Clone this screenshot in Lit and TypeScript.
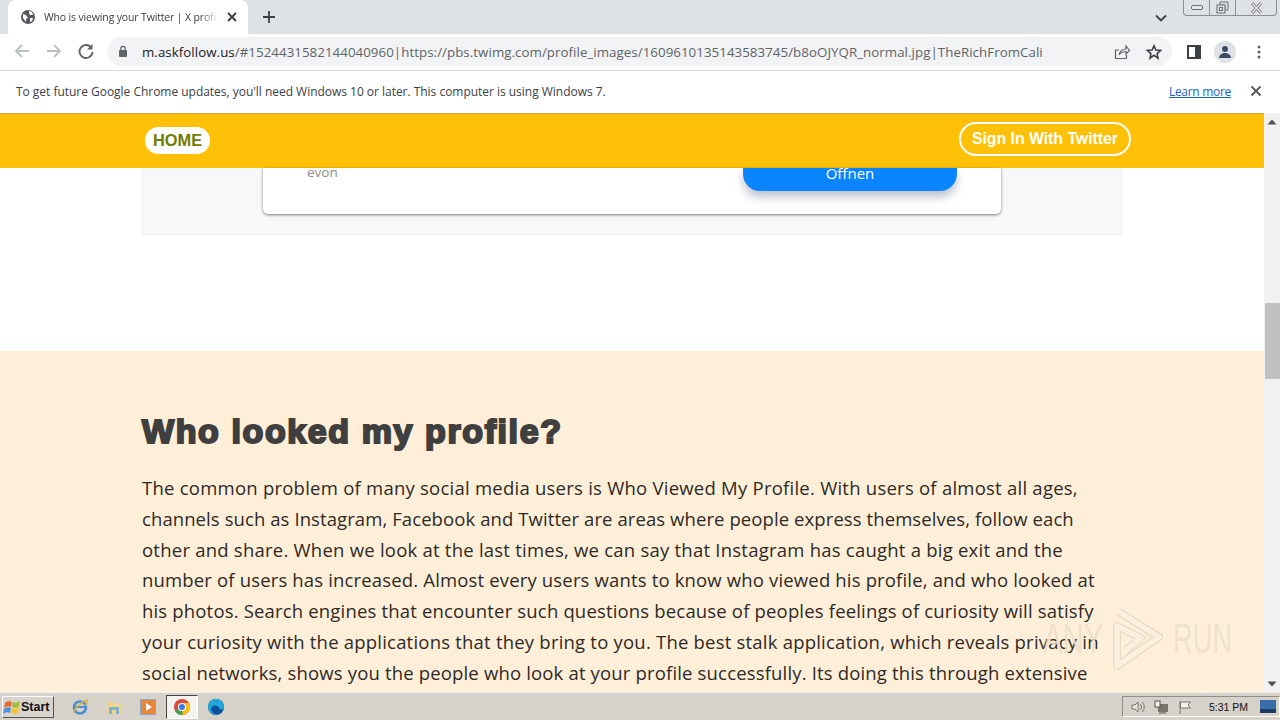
import {LitElement, html, css, svg} from 'lit';
import {customElement} from 'lit/decorators.js';

// spacing per line, the reference text is hinted wider than Open Sans
const LINES = [
  {text: 'The common problem of many social media users is Who Viewed My Profile. With users of almost all ages,', spacing: 0.24},
  {text: 'channels such as Instagram, Facebook and Twitter are areas where people express themselves, follow each', spacing: 0.087},
  {text: 'other and share. When we look at the last times, we can say that Instagram has caught a big exit and the', spacing: 0.23},
  {text: 'number of users has increased. Almost every users wants to know who viewed his profile, and who looked at', spacing: 0.16},
  {text: 'his photos. Search engines that encounter such questions because of peoples feelings of curiosity will satisfy', spacing: 0.17},
  {text: 'your curiosity with the applications that they bring to you. The best stalk application, which reveals privacy in', spacing: 0.21},
  {text: 'social networks, shows you the people who look at your profile successfully. Its doing this through extensive', spacing: 0.164},
];

@customElement('app-root')
export class AppRoot extends LitElement {
  static styles = css`
    :host {
      display: flex;
      flex-direction: column;
      width: 1280px;
      height: 720px;
      overflow: hidden;
      position: relative;
      background: #fff;
      font-family: 'Open Sans', 'Liberation Sans', sans-serif;
    }
    svg { display: block; flex: none; }

    .tabstrip {
      height: 34px;
      flex: none;
      background: #dee1e6;
      display: flex;
      align-items: flex-end;
      padding-left: 8px;
      position: relative;
    }
    .tab {
      width: 240px;
      height: 34px;
      background: #fff;
      border-radius: 8px 8px 0 0;
      display: flex;
      align-items: center;
      padding: 0 10px 0 12px;
      box-sizing: border-box;
      gap: 8px;
    }
    .tab-title {
      flex: 1;
      font: 10.5px 'Open Sans', sans-serif;
      letter-spacing: -0.15px;
      color: #3c4043;
      white-space: nowrap;
      overflow: hidden;
      -webkit-mask-image: linear-gradient(90deg, #000 90%, transparent);
    }
    .newtab { margin-left: 14px; align-self: center; }
    .tab-chevron { margin-left: auto; margin-right: 113px; align-self: center; margin-top: 2px; }
    .winbtns {
      position: absolute;
      top: 0;
      right: 3px;
      width: 94px;
      height: 16px;
      border: 1px solid #8b8e93;
      border-top: none;
      border-radius: 0 0 4px 4px;
      display: flex;
      box-sizing: border-box;
    }
    .winbtns > div {
      width: 25px;
      display: flex;
      align-items: center;
      justify-content: center;
      border-right: 1px solid #8b8e93;
    }
    .winbtns > div:nth-child(3) { flex: 1; border-right: none; }

    .toolbar {
      height: 37px;
      flex: none;
      background: #fff;
      border-bottom: 1px solid #d9dadc;
      box-sizing: border-box;
      display: flex;
      align-items: center;
      padding: 0 12px 2px 13px;
    }
    .nav { display: flex; gap: 14px; margin-right: 12px; }
    .omnibox {
      width: 1065px;
      height: 29px;
      box-sizing: border-box;
      background: #f1f3f4;
      border-radius: 15px;
      display: flex;
      align-items: center;
      padding: 0 10px 0 11px;
      margin-top: 1px;
    }
    .url {
      flex: 1;
      margin-left: 14px;
      font: 13.3px 'Open Sans', sans-serif;
      letter-spacing: 0.055px;
      color: #5f6368;
      white-space: nowrap;
      overflow: hidden;
    }
    .url b { font-weight: 400; color: #202124; }
    .omni-icons { display: flex; gap: 16px; margin-left: 60px; }
    .tool-right { display: flex; align-items: center; margin-left: 15px; gap: 13px; margin-top: 1px; }
    .avatar {
      width: 22px;
      height: 22px;
      border-radius: 50%;
      background: #dee1e6;
      display: flex;
      align-items: center;
      justify-content: center;
    }
    .dots { margin-left: 8px; }

    .infobar {
      height: 42px;
      flex: none;
      box-sizing: border-box;
      display: flex;
      align-items: center;
      padding: 0 18px 2px 16px;
      font: 12px 'Open Sans', sans-serif;
      color: #3c4043;
      background: #fff;
    }
    .infobar span { flex: 1; letter-spacing: -0.025px; }
    .infobar a { color: #1a62c5; text-decoration: underline; margin-right: 19px; letter-spacing: -0.3px; }

    .viewport {
      flex: 1;
      min-height: 0;
      display: flex;
      position: relative;
    }
    .page { flex: 1; min-width: 0; overflow: hidden; background: #fff; }
    .header {
      height: 55px;
      background: #ffc107;
      border-top: 1px solid #c9a544;
      box-sizing: border-box;
      display: flex;
      align-items: center;
      justify-content: space-between;
      padding: 0 133px 4px 145px;
    }
    .home {
      background: #fff;
      border-radius: 14px;
      height: 27px;
      padding: 0 8px;
      display: flex;
      align-items: center;
      font: 700 16.4px 'Liberation Sans', sans-serif;
      color: #6f7d00;
      margin-top: 3px;
    }
    .signin {
      border: 2px solid #fff;
      border-radius: 17px;
      height: 34px;
      box-sizing: border-box;
      padding: 0 11px;
      display: flex;
      align-items: center;
      font: 700 15.8px 'Liberation Sans', sans-serif;
      color: #fff;
      margin-top: -1px;
    }

    .ad {
      margin: 0 142px;
      width: 980px;
      height: 67px;
      box-sizing: border-box;
      background: #f8f8f8;
      border: 1px solid #eceded;
      border-top: none;
      padding: 0 120px;
    }
    .ad-card {
      height: 46px;
      background: #fff;
      border-radius: 0 0 5px 5px;
      box-shadow: 0 1px 3px rgba(0, 0, 0, 0.5);
      display: flex;
      justify-content: space-between;
      padding: 0 44px;
      box-sizing: border-box;
    }
    .evon { font: 13.5px 'Open Sans', sans-serif; color: #8d8d8d; margin-top: -5px; }
    .open {
      width: 214px;
      height: 23px;
      background: #0a84ff;
      border-radius: 0 0 17px 17px;
      box-shadow: 0 6px 10px rgba(40, 50, 90, 0.3);
      color: #fff;
      font: 15px 'Open Sans', sans-serif;
      text-align: center;
      line-height: 11px;
    }

    .article {
      margin-top: 116px;
      height: 400px;
      background: #ffefd9;
      padding: 58px 142px 0;
      box-sizing: border-box;
    }
    h1 {
      margin: -1px 0 19px;
      font: 700 34px/46px 'Liberation Sans', sans-serif;
      -webkit-text-stroke: 2.1px #3f3f3f;
      letter-spacing: 1.6px;
      color: #3f3f3f;
    }
    .line {
      display: block;
      font-size: 18.5px;
      line-height: 30.8px;
      color: #2d2a26;
      white-space: nowrap;
      font-family: 'Open Sans', sans-serif;
    }

    .scrollbar {
      width: 16px;
      flex: none;
      background: #f1f1f1;
      display: flex;
      flex-direction: column;
      align-items: center;
      padding-top: 190px;
      box-sizing: border-box;
      position: relative;
    }
    .thumb { width: 15px; height: 76px; background: #c1c1c1; }
    .arrow-up, .arrow-down { position: absolute; left: 3px; }
    .arrow-up { top: 6px; }
    .arrow-down { bottom: 5px; }

    .taskbar {
      height: 28px;
      flex: none;
      background: #d6d2c9;
      border-top: 1px solid #f3f1ec;
      box-sizing: border-box;
      display: flex;
      align-items: center;
      padding: 0 0 0 2px;
      position: relative;
    }
    .start {
      width: 52px;
      height: 22px;
      box-sizing: border-box;
      background: #d8d4cc;
      border: 1px solid;
      border-color: #fff #555 #555 #fff;
      display: flex;
      align-items: center;
      gap: 0;
      font: 700 12.5px 'Liberation Sans', sans-serif;
      color: #111;
      padding-left: 0;
    }
    .quick { display: flex; align-items: center; margin-left: 17px; gap: 16px; }
    .active-app {
      width: 32px;
      height: 24px;
      background: #f4f3f0;
      border: 1px solid;
      border-color: #444 #fff #fff #444;
      box-sizing: border-box;
      display: flex;
      align-items: center;
      justify-content: center;
      margin: 0 -7px 0 -7px;
    }
    .tray {
      margin-left: auto;
      width: 158px;
      height: 21px;
      margin-right: 0;
      border: 1px solid;
      border-color: #8f8c86 #fff #fff #8f8c86;
      box-sizing: border-box;
      display: flex;
      align-items: center;
      padding-left: 8px;
      gap: 9px;
    }
    .clock { font: 10.5px 'Liberation Sans', sans-serif; color: #111; margin: 0 3px 0 8px; }

    .watermark {
      position: absolute;
      left: 1043px;
      top: 608px;
      display: flex;
      align-items: center;
      opacity: 0.85;
      pointer-events: none;
      font: 42px/62px 'Liberation Sans', sans-serif;
      color: #ecdfcb;
    }
    .wm-text { display: block; transform-origin: left center; white-space: nowrap; }
    .wm-any { width: 67px; transform: scaleX(0.7); }
    .wm-run { width: 60px; margin-left: 10px; transform: scaleX(0.65); }
  `;

  private icon(w: number, h: number, body: unknown) {
    return html`<svg width=${w} height=${h} viewBox="0 0 ${w} ${h}">${body}</svg>`;
  }

  render() {
    return html`
      <div class="tabstrip">
        <div class="tab">
          ${this.icon(16, 16, svg`<circle cx="8" cy="8" r="7" fill="#55585c"/><path d="M3 5l3 1 2 3-2 1v3L3 9zM9 2l3 1 1 3-3 0-1-2zM10 9l3 0-1 3-2 1z" fill="#fff"/>`)}
          <div class="tab-title">Who is viewing your Twitter | X profile</div>
          ${this.icon(12, 12, svg`<path d="M2 2l8 8M10 2l-8 8" stroke="#3c4043" stroke-width="1.8"/>`)}
        </div>
        <div class="newtab">${this.icon(14, 14, svg`<path d="M7 1v12M1 7h12" stroke="#3c4043" stroke-width="1.8"/>`)}</div>
        <div class="tab-chevron">${this.icon(12, 8, svg`<path d="M1 1.500l5 5 5-5" fill="none" stroke="#3c4043" stroke-width="1.8"/>`)}</div>
        <div class="winbtns">
          <div>${this.icon(12, 6, svg`<rect x="0.5" y="0.5" width="11" height="4" rx="1.5" fill="#e8eaed" stroke="#6b6e73"/>`)}</div>
          <div>${this.icon(13, 13, svg`<path d="M4 1h8v8H9V4H4z" fill="#dee1e6" stroke="#6b6e73"/><rect x="1" y="4" width="8" height="8" fill="#dee1e6" stroke="#6b6e73"/><rect x="3.5" y="6.5" width="3" height="3" fill="none" stroke="#6b6e73"/>`)}</div>
          <div>${this.icon(13, 12, svg`<path d="M2 1l9 10M11 1L2 11" stroke="#6b6e73" stroke-width="3"/><path d="M2 1l9 10M11 1L2 11" stroke="#e8eaed" stroke-width="1.4"/>`)}</div>
        </div>
      </div>

      <div class="toolbar">
        <div class="nav">
          ${this.icon(18, 16, svg`<path d="M16 8H3M9 2L3 8l6 6" fill="none" stroke="#bcc0c4" stroke-width="1.8"/>`)}
          ${this.icon(18, 16, svg`<path d="M2 8h13M9 2l6 6-6 6" fill="none" stroke="#bcc0c4" stroke-width="1.8"/>`)}
          ${this.icon(18, 16, svg`<path d="M14.5 5A6.5 6.5 0 1 0 15.5 9" fill="none" stroke="#5f6368" stroke-width="1.9"/><path d="M15.5 1v5.5H10z" fill="#5f6368"/>`)}
        </div>
        <div class="omnibox">
          ${this.icon(10, 13, svg`<rect x="1" y="5" width="8" height="7" rx="1" fill="#5f6368"/><path d="M2.8 5V3.5a2.2 2.2 0 0 1 4.4 0V5" fill="none" stroke="#5f6368" stroke-width="1.2"/>`)}
          <div class="url"><b>m.askfollow.us</b>/#1524431582144040960|https://pbs.twimg.com/profile_images/1609610135143583745/b8oOJYQR_normal.jpg|TheRichFromCali</div>
          <div class="omni-icons">
            ${this.icon(16, 16, svg`<path d="M5 6H1.5v8.5h11V11M5 11c1-4 4-6 7-6V2l3.500 4.500L12 10V7.500C9 7.500 7 8.500 5 11z" fill="none" stroke="#5f6368" stroke-width="1.2"/>`)}
            ${this.icon(16, 16, svg`<path d="M8 1.800l1.900 4.200 4.600.5-3.400 3.100.9 4.500L8 11.300l-4 2.800.9-4.500L1.500 6.500l4.600-.5z" fill="none" stroke="#3c4043" stroke-width="1.600"/>`)}
          </div>
        </div>
        <div class="tool-right">
          ${this.icon(14, 14, svg`<rect x="1" y="1" width="12" height="12" fill="#fff" stroke="#3c4043" stroke-width="2"/><rect x="8" y="1" width="5" height="12" fill="#3c4043"/>`)}
          <div class="avatar">${this.icon(14, 14, svg`<circle cx="7" cy="4" r="3" fill="#3c4a66"/><path d="M1 13c0-3 3-5 6-5s6 2 6 5z" fill="#3c4a66"/>`)}</div>
          <div class="dots">${this.icon(4, 14, svg`<circle cx="2" cy="2" r="1.500" fill="#5f6368"/><circle cx="2" cy="7" r="1.500" fill="#5f6368"/><circle cx="2" cy="12" r="1.500" fill="#5f6368"/>`)}</div>
        </div>
      </div>

      <div class="infobar">
        <span>To get future Google Chrome updates, you'll need Windows 10 or later. This computer is using Windows 7.</span>
        <a>Learn more</a>
        ${this.icon(12, 12, svg`<path d="M1.500 1.500l9 9M10.500 1.500l-9 9" stroke="#55585c" stroke-width="1.800"/>`)}
      </div>

      <div class="viewport">
        <div class="page">
          <div class="header">
            <div class="home">HOME</div>
            <div class="signin">Sign In With Twitter</div>
          </div>
          <div class="ad">
            <div class="ad-card">
              <div class="evon">evon</div>
              <div class="open">Offnen</div>
            </div>
          </div>
          <div class="article">
            <h1>Who looked my profile?</h1>
            ${LINES.map((l) => html`<span class="line" style="letter-spacing:${l.spacing}px">${l.text}</span>`)}
          </div>
        </div>
        <div class="scrollbar">
          <div class="arrow-up">${this.icon(10, 6, svg`<path d="M5 0.500l4.500 5H.5z" fill="#505050"/>`)}</div>
          <div class="thumb"></div>
          <div class="arrow-down">${this.icon(10, 6, svg`<path d="M5 5.500L.5.500h9z" fill="#505050"/>`)}</div>
        </div>
      </div>

      <div class="taskbar">
        <div class="start">
          ${this.icon(18, 16, svg`<path d="M2 4c2-2 4-2 7-1L8 8C6 7 4 7 1 9z" fill="#e8682e"/><path d="M10 3c2 1 4 1 7-1l-1 6c-3 1-5 1-7 0z" fill="#9fbf3a"/><path d="M1 10c3-2 5-2 7-1l-1 5c-2-1-4-1-7 1z" fill="#4a93d9"/><path d="M9 9c2 1 4 1 7 0l-1 5c-3 1-5 1-7 0z" fill="#f2c62e"/>`)}
          Start
        </div>
        <div class="quick">
          ${this.icon(18, 18, svg`<circle cx="9" cy="9.500" r="6" fill="none" stroke="#4a90d0" stroke-width="2.500"/><path d="M4 9h10" stroke="#4a90d0" stroke-width="2"/><path d="M3 15C1 12 12 3 16 2c1 2-1 5-2 6" fill="none" stroke="#e3b53a" stroke-width="1.500"/>`)}
          ${this.icon(18, 18, svg`<path d="M2 4h6l2 2h6v10H2z" fill="#efd48a"/><rect x="4" y="9" width="10" height="7" fill="#7fb4cc"/><rect x="7" y="12" width="4" height="4" fill="#efd48a"/>`)}
          ${this.icon(18, 18, svg`<rect x="1.500" y="1.500" width="15" height="15" fill="#e8873a" stroke="#8aa9c9"/><path d="M7 5l6 4-6 4z" fill="#fff"/>`)}
          <div class="active-app">
            ${this.icon(18, 18, svg`<circle cx="9" cy="9" r="8" fill="#d9483b"/><path d="M9 9L2.100 13A8 8 0 0 0 9.500 17z" fill="#3aa757"/><path d="M9 5h7a8 8 0 0 1-6.500 12z" fill="#f4c20d"/><circle cx="9" cy="9" r="4" fill="#fff"/><circle cx="9" cy="9" r="3" fill="#3b78e7"/>`)}
          </div>
          ${this.icon(18, 18, svg`<circle cx="9" cy="9" r="8" fill="#0b4f9e"/><path d="M1 9a8 8 0 0 1 16 0c0 3-4 3-5 1-1-3-7-4-8 1 0 3 4 6 8 5a8 8 0 0 1-11-7z" fill="#1fa8d8"/>`)}
        </div>
        <div class="tray">
          ${this.icon(14, 14, svg`<path d="M1 5h3l3-3v10L4 9H1z" fill="#e9e7e1" stroke="#77746e"/><path d="M9 4c2 2 2 4 0 6M11 2c3 3 3 7 0 10" fill="none" stroke="#77746e"/>`)}
          ${this.icon(15, 14, svg`<rect x="4" y="4" width="10" height="8" fill="#77746e"/><rect x="1" y="1" width="5" height="6" fill="#f3f1ec" stroke="#55524d"/><path d="M5 13h7" stroke="#55524d"/>`)}
          ${this.icon(14, 14, svg`<path d="M2 1v13" stroke="#77746e"/><path d="M2.500 2h10l-2.500 3 2.500 3h-10z" fill="#f3f1ec" stroke="#77746e"/>`)}
          <span class="clock">5:31 PM</span>
          ${this.icon(16, 13, svg`<rect width="16" height="13" fill="#3a6ea8"/><rect y="9" width="16" height="4" fill="#203a66"/>`)}
        </div>
      </div>

      <div class="watermark">
        <span class="wm-text wm-any">ANY</span>
        ${this.icon(53, 62, svg`
          <path d="M9 4L49 29 7 58V18L31 30 16 42" fill="none" stroke="#e3d6c3" stroke-width="8" stroke-linejoin="round"/>
          <path d="M9 4L49 29 7 58V18L31 30 16 42" fill="none" stroke="#fbf0e0" stroke-width="5.500" stroke-linejoin="round"/>
        `)}
        <span class="wm-text wm-run">RUN</span>
      </div>
    `;
  }
}
